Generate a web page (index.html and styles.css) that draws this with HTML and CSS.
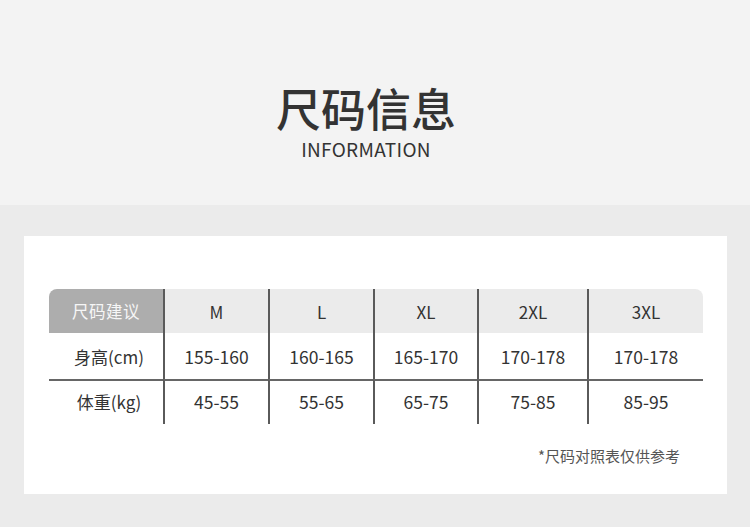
FILE: index.html
```html
<!DOCTYPE html>
<html lang="zh">
<head>
<meta charset="utf-8">
<title>尺码信息</title>
<link rel="stylesheet" href="styles.css">
</head>
<body>
<header class="hero">
  <h1 class="hero-title">尺码信息</h1>
  <p class="hero-sub">INFORMATION</p>
</header>
<section class="band">
  <div class="card">
    <div class="size-table">
      <div class="cell head head-first">尺码建议</div>
      <div class="cell head line">M</div>
      <div class="cell head line">L</div>
      <div class="cell head line">XL</div>
      <div class="cell head line">2XL</div>
      <div class="cell head line head-last">3XL</div>

      <div class="cell label">身高(cm)</div>
      <div class="cell line">155-160</div>
      <div class="cell line">160-165</div>
      <div class="cell line">165-170</div>
      <div class="cell line">170-178</div>
      <div class="cell line">170-178</div>

      <div class="cell label top">体重(kg)</div>
      <div class="cell line top">45-55</div>
      <div class="cell line top">55-65</div>
      <div class="cell line top">65-75</div>
      <div class="cell line top">75-85</div>
      <div class="cell line top">85-95</div>
    </div>
    <p class="note">*尺码对照表仅供参考</p>
  </div>
</section>
</body>
</html>
```
FILE: styles.css
```css
* { box-sizing: border-box; }
html, body {
  margin: 0;
  padding: 0;
}
body {
  width: 750px;
  height: 527px;
  overflow: hidden;
  background: #ebebeb;
  font-family: "Noto Sans CJK SC", "Noto Sans", sans-serif;
  color: #333;
}
.hero {
  height: 205px;
  background: #f3f3f3;
  padding-top: 84px;
  padding-right: 18px;
  text-align: center;
}
.hero-title {
  margin: 0;
  font-size: 45px;
  line-height: 48px;
  font-weight: 500;
  color: #333;
}
.hero-sub {
  margin: 5px 0 0;
  font-size: 19px;
  line-height: 24px;
  color: #333;
  letter-spacing: 0.3px;
}
.band {
  padding: 31px 23px 33px 24px;
}
.card {
  background: #fff;
  height: 258px;
  padding: 53px 0 0 25px;
}
.size-table {
  display: grid;
  grid-template-columns: 114px 105px 105px 104px 110px 116px;
  grid-template-rows: 44px 46px 45px;
  width: 654px;
}
.cell {
  display: flex;
  align-items: center;
  justify-content: center;
  font-size: 17.5px;
  color: #333;
}
.line { border-left: 2px solid #5a5a5a; }
.top { border-top: 2px solid #666; padding-bottom: 3px; }
.head { background: #ebebeb; font-size: 17px; }
.head-first {
  background: #adadad;
  color: #f6f6f6;
  font-size: 16.5px;
  letter-spacing: 0.5px;
  border-top-left-radius: 8px;
}
.head-last { border-top-right-radius: 8px; }
.label { padding-left: 6px; font-size: 17px; }
.note {
  margin: 22px 0 0;
  width: 631px;
  text-align: right;
  font-size: 15px;
  line-height: 20px;
  color: #555;
}
```
